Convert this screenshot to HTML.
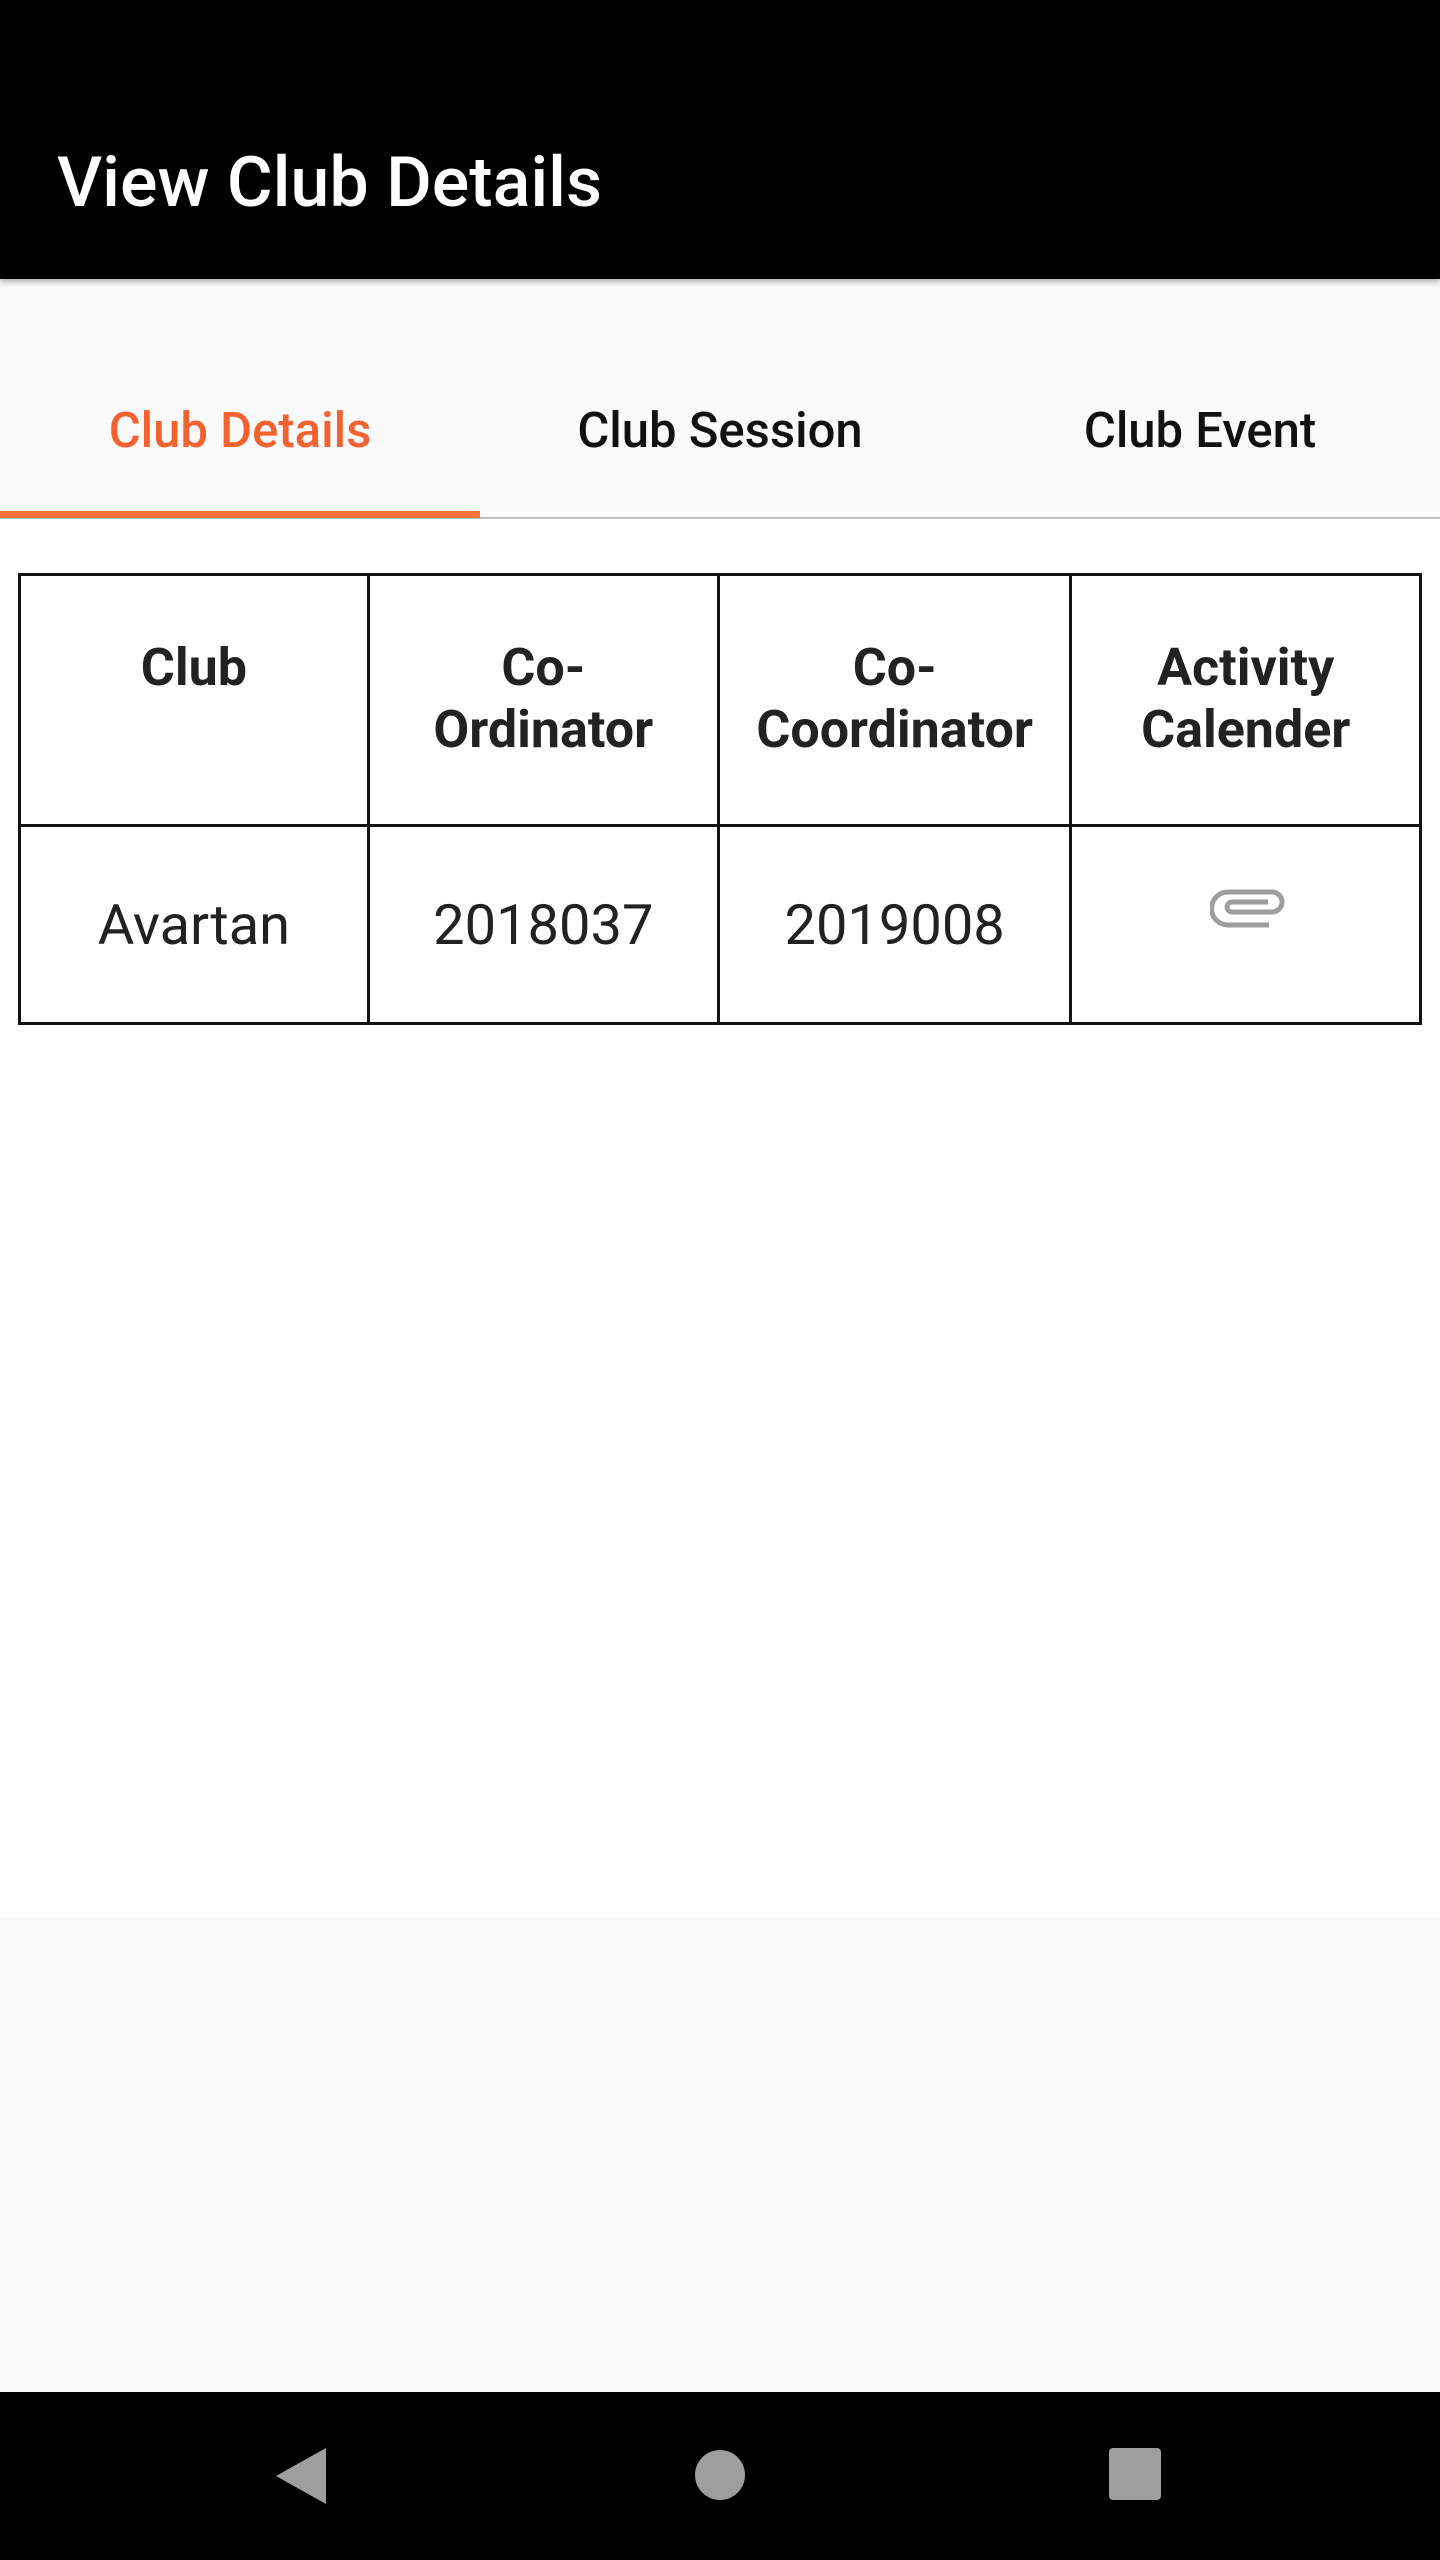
<!DOCTYPE html>
<html><head><style>
body{margin:0;width:1440px;height:2560px;position:relative;background:#fafafa;font-family:"Roboto","Liberation Sans",sans-serif;overflow:hidden}
.hdr{position:absolute;left:0;top:0;width:1440px;height:279px;background:#000;box-shadow:0 3px 6px rgba(0,0,0,.3);z-index:2}
.hdr span{position:absolute;left:57px;top:142px;color:#fff;font-size:70px;font-weight:500}
.tabs{position:absolute;top:279px;left:0;width:1440px;height:238px;background:#fafafa;border-bottom:2px solid #bdbdbd}
.tab{position:absolute;top:0;width:480px;height:238px;line-height:304px;text-align:center;font-size:49px;font-weight:500;color:#111}
.ind{position:absolute;left:0;top:511px;width:480px;height:7px;background:#f4743b}
.content{position:absolute;top:519px;left:0;width:1440px;height:1398px;background:#fff}
table{position:absolute;left:18px;top:573px;border-collapse:collapse;width:1404px}
td{border:3px solid #111;width:351px;text-align:center;color:#222}
th{border:3px solid #111;width:351px;font-size:52px;font-weight:bold;color:#222;height:251px;vertical-align:top;padding-top:61px;line-height:62px;box-sizing:border-box}
td{height:193px;font-size:56px}
.nav{position:absolute;left:0;top:2392px;width:1440px;height:168px;background:#000}
</style></head><body>
<div class="hdr"><span>View Club Details</span></div>
<div class="tabs">
<div class="tab" style="left:0;color:#f4622f">Club Details</div>
<div class="tab" style="left:480px">Club Session</div>
<div class="tab" style="left:960px">Club Event</div>
</div>
<div class="ind"></div>
<div class="content"></div>
<table>
<tr><th>Club</th><th>Co-<br>Ordinator</th><th>Co-<br>Coordinator</th><th>Activity<br>Calender</th></tr>
<tr><td>Avartan</td><td>2018037</td><td>2019008</td><td></td></tr>
</table>
<svg style="position:absolute;left:1210px;top:889px" width="80" height="42" viewBox="0 0 80 42"><path d="M59 36 H18 A16.5 16.5 0 0 1 18 3 H62 A10 10 0 0 1 62 23 H22 A5 5 0 0 1 22 13 H58" fill="none" stroke="#9e9e9e" stroke-width="5"/></svg>
<div class="nav">
<svg style="position:absolute;left:274px;top:54px" width="56" height="60"><polygon points="52,2 52,58 2,30" fill="#9e9e9e"/></svg>
<div style="position:absolute;left:695px;top:58px;width:50px;height:50px;border-radius:50%;background:#9e9e9e"></div>
<div style="position:absolute;left:1109px;top:56px;width:52px;height:52px;border-radius:4px;background:#9e9e9e"></div>
</div>
</body></html>
